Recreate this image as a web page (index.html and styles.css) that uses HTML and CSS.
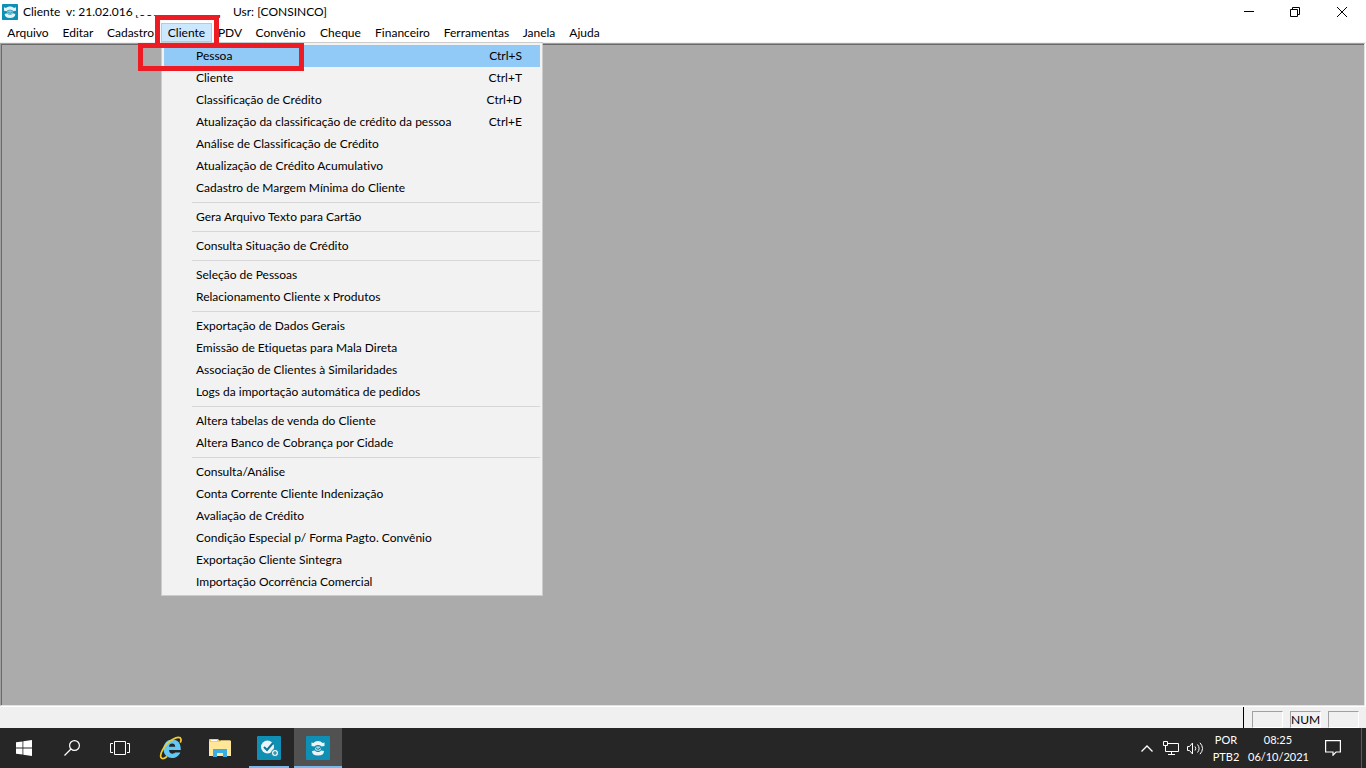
FILE: index.html
```
<!DOCTYPE html>
<html lang="pt-br">
<head>
<meta charset="utf-8">
<title>Cliente</title>
<link rel="stylesheet" href="styles.css">
</head>
<body>
<header class="titlebar">
	<svg class="appicon" viewBox="0 0 24 24">
		<rect width="24" height="24" rx="1" fill="#0f8fb3"/>
		<path d="M3 10V5l3 1c3-3 9-3 12 0l3-1v5l-4 1c-2-3-8-3-10 0zM4 15l4-1c2 3 6 3 8 0l4 1c0 4-3 6-8 6s-8-2-8-6z" fill="#e3f2f6"/>
		<path d="M8 11q4-3 8 0v3q-4 4-8 0z" fill="#8ccbdb"/>
		<path d="M9 12l3 2 3-2" fill="none" stroke="#0f7f9f"/>
	</svg>
	<h1 class="caption">Cliente</h1>
	<span class="version">v: 21.02.016</span>
	<span class="company"><span>[001 -</span><span>]</span></span>
	<span class="user">Usr: [CONSINCO]</span>
	<div class="winbuttons">
		<button type="button" aria-label="Minimizar"><svg viewBox="0 0 10 10"><path d="M0 4.500h10"/></svg></button>
		<button type="button" aria-label="Restaurar"><svg viewBox="0 0 10 10"><path d="M.5 2.500h7v7h-7zM2.500 2.500v-2h7v7h-2"/></svg></button>
		<button type="button" aria-label="Fechar"><svg viewBox="0 0 10 10"><path d="M0 0l10 10M10 0L0 10"/></svg></button>
	</div>
</header>

<nav class="menubar">
	<button type="button">Arquivo</button>
	<button type="button">Editar</button>
	<button type="button">Cadastro</button>
	<div class="menu">
		<button type="button" class="open">Cliente</button>
		<div class="popup">
			<button type="button" class="selected">Pessoa<kbd>Ctrl+S</kbd></button>
			<button type="button">Cliente<kbd>Ctrl+T</kbd></button>
			<button type="button">Classificação de Crédito<kbd>Ctrl+D</kbd></button>
			<button type="button">Atualização da classificação de crédito da pessoa<kbd>Ctrl+E</kbd></button>
			<button type="button">Análise de Classificação de Crédito</button>
			<button type="button">Atualização de Crédito Acumulativo</button>
			<button type="button">Cadastro de Margem Mínima do Cliente</button>
			<hr>
			<button type="button">Gera Arquivo Texto para Cartão</button>
			<hr>
			<button type="button">Consulta Situação de Crédito</button>
			<hr>
			<button type="button">Seleção de Pessoas</button>
			<button type="button">Relacionamento Cliente x Produtos</button>
			<hr>
			<button type="button">Exportação de Dados Gerais</button>
			<button type="button">Emissão de Etiquetas para Mala Direta</button>
			<button type="button">Associação de Clientes à Similaridades</button>
			<button type="button">Logs da importação automática de pedidos</button>
			<hr>
			<button type="button">Altera tabelas de venda do Cliente</button>
			<button type="button">Altera Banco de Cobrança por Cidade</button>
			<hr>
			<button type="button">Consulta/Análise</button>
			<button type="button">Conta Corrente Cliente Indenização</button>
			<button type="button">Avaliação de Crédito</button>
			<button type="button">Condição Especial p/ Forma Pagto. Convênio</button>
			<button type="button">Exportação Cliente Sintegra</button>
			<button type="button">Importação Ocorrência Comercial</button>
		</div>
		<div class="mark mark-menu"></div>
		<div class="mark mark-item"></div>
	</div>
	<button type="button">PDV</button>
	<button type="button">Convênio</button>
	<button type="button">Cheque</button>
	<button type="button">Financeiro</button>
	<button type="button">Ferramentas</button>
	<button type="button">Janela</button>
	<button type="button">Ajuda</button>
</nav>

<main class="workspace"></main>

<div class="statusbar">
	<div class="panes">
		<span></span>
		<span>NUM</span>
		<span></span>
	</div>
</div>

<footer class="taskbar">
	<div class="system">
		<button type="button" aria-label="Iniciar">
			<svg width="16" height="16" viewBox="0 0 16 16" fill="#fff"><path d="M0 2.300L6.500 1.400v6.200H0zM7.300 1.300L16 0v7.600H7.300zM0 8.400h6.500v6.200L0 13.700zM7.300 8.400H16V16l-8.700-1.300z"/></svg>
		</button>
		<button type="button" aria-label="Pesquisar">
			<svg width="16" height="16" viewBox="0 0 16 16" fill="none" stroke="#fff" stroke-width="1.200"><circle cx="10.500" cy="5.500" r="4.900"/><path d="M7 9L.5 15.500"/></svg>
		</button>
		<button type="button" aria-label="Visão de tarefas">
			<svg width="20" height="14" viewBox="0 0 20 14" fill="none" stroke="#fff"><path d="M4.500.5h11v13h-11zM3 2.500H.5v9H3M17 2.500h2.500v9H17"/></svg>
		</button>
	</div>
	<div class="apps">
		<button type="button" aria-label="Internet Explorer">
			<svg width="24" height="24" viewBox="0 0 24 24" fill="none">
				<path d="M21.300 16.500C20 20 16.800 22 13 22c-5 0-8.500-3.700-8.500-9S8 3.500 13.300 3.500c5.500 0 8.700 4 8.500 10.500H10c.2 2.300 1.400 3.700 3.400 3.700 1.300 0 2.200-.4 2.800-1.200zM10 10.800h6.200c-.1-2-1.200-3.200-3-3.200S10.200 8.800 10 10.800z" fill="#62c8f5"/>
				<path d="M8 20.500c-2 1.600-4 2.600-5.300 1.800C-.5 20 4.500 8.500 14 3.300c4-2.200 7.300-2.700 8 0 .2 1-.2 2.300-.8 3.300" stroke="#f6cb2d" stroke-width="1.700"/>
			</svg>
		</button>
		<button type="button" aria-label="Explorador de Arquivos">
			<svg width="22" height="18" viewBox="0 0 22 18">
				<path d="M0 1q0-1 1-1h8l1.500 1.500H21q1 0 1 1V17H0z" fill="#f4cf63"/>
				<path d="M0 3h11l1-1.500h9l1 1V17H0z" fill="#ffe699"/>
				<path d="M2 1h6v1H2z" fill="#fff"/>
				<path d="M4 10h14v8h-4v-4H8v4H4z" fill="#3aaee3"/>
			</svg>
		</button>
		<button type="button" class="running" aria-label="Consinco">
			<svg width="24" height="24" viewBox="0 0 24 24">
				<rect width="24" height="24" rx="1" fill="#0f8fb3"/>
				<circle cx="10.500" cy="11" r="6.500" fill="#eef4f6"/>
				<path d="M7 11l3 3 6-7" fill="none" stroke="#0b7695" stroke-width="2"/>
				<circle cx="18" cy="17" r="3.600" fill="#eef4f6" stroke="#0f8fb3"/>
				<path d="M16 17h4M18 15v4" stroke="#0f7f9f" stroke-width="1.200"/>
			</svg>
		</button>
		<button type="button" class="running active" aria-label="Cliente">
			<svg width="24" height="24" viewBox="0 0 24 24">
				<rect width="24" height="24" rx="1" fill="#0f8fb3"/>
				<path d="M5.500 10V6.500L7.500 7c2-2.700 7-2.700 9 0l2-.5V10l-3 .5c-1.500-2-5.500-2-7 0zM6 15l3-.5c1.500 2 4.500 2 6 0l3 .5c0 3-2 4.500-6 4.500S6 18 6 15z" fill="#eef4f6"/>
				<path d="M9 11.500q3-2.500 6 0v2q-3 3-6 0z" fill="#a5d5e1"/>
				<path d="M9.500 11.500l2.500 2 3-2" fill="none" stroke="#0f7f9f"/>
			</svg>
		</button>
	</div>
	<div class="tray">
		<svg width="12" height="7" viewBox="0 0 12 7" fill="none" stroke="#fff" stroke-width="1.300"><path d="M.5 6.500L6 1l5.500 5.500"/></svg>
		<svg width="16" height="14" viewBox="0 0 16 14" fill="none" stroke="#fff"><path d="M5 2.500h10.500v8H2.500V5M.5.5h4v4h-4zM8.500 10.500v3M5 13.500h7"/></svg>
		<svg width="17" height="13" viewBox="0 0 17 13" fill="none" stroke="#fff"><path d="M.5 4.500h2l3-3.500v11l-3-3.500h-2zM8 4.500q1.500 2 0 4M10.500 2.500q3.200 4 0 8M13 .8q5 5.700 0 11.400"/></svg>
		<div class="lang">POR<br>PTB2</div>
		<div class="clock">08:25<br>06/10/2021</div>
		<svg width="16" height="16" viewBox="0 0 16 16" fill="none" stroke="#fff" stroke-width="1.200"><path d="M.6.6h14.800v11.400H11L8 15.200V12H.6z"/></svg>
	</div>
</footer>
</body>
</html>
```
FILE: styles.css
```
*{
	box-sizing:border-box;
}

body{
	margin:0;
	height:100vh;
	display:flex;
	flex-direction:column;
	background:#fff;
	color:#000;
	font:12px/16px Lato, "Open Sans", sans-serif;
	font-variant-ligatures:none;
}

button{
	margin:0;
	padding:0;
	border:0;
	background:none;
	color:inherit;
	font:inherit;
	font-variant-ligatures:none;
}

svg{
	display:block;
}

/* title bar */
.titlebar{
	display:flex;
	align-items:center;
	height:23px;
	padding-left:2px;
}

.appicon{
	width:16px;
	height:16px;
	margin-right:5px;
}

.caption{
	margin:0;
	width:43px;
	font-size:12px;
	font-weight:normal;
	line-height:16px;
}

.version{
	width:66px;
	white-space:nowrap;
}

.company{
	position:relative;
	display:flex;
	justify-content:space-between;
	width:86px;
	margin:0 12px 0 3px;
}

.company::after{
	content:"";
	position:absolute;
	top:0;
	left:0;
	right:0;
	height:11px;
	background:#fff;
}

.winbuttons{
	display:flex;
	margin-left:auto;
}

.winbuttons button{
	display:flex;
	align-items:center;
	justify-content:center;
	width:46px;
	height:20px;
}

.winbuttons svg{
	width:10px;
	height:10px;
	fill:none;
	stroke:#000;
}

.winbuttons button:last-child{
	width:48px;
}

/* menu bar */
.menubar{
	display:grid;
	grid-template-columns:56px 44px 61px 51px 36px 65px 55px 69px 79px 46px 45px;
	height:20px;
	border-bottom:1px solid #f0f0f0;
}

.menubar > button,
.menu .open{
	white-space:nowrap;
	text-align:center;
}

.menu{
	position:relative;
}

.menu .open{
	width:100%;
	height:19px;
	background:#cce8ff;
	border:1px solid #99d1ff;
}

.popup{
	position:absolute;
	z-index:1;
	top:19px;
	left:0;
	width:382px;
	padding:2px;
	background:#f2f2f2;
	border:1px solid #ccc;
}

.popup button{
	display:flex;
	justify-content:space-between;
	align-items:center;
	width:100%;
	height:22px;
	padding:0 18px 0 32px;
	text-align:left;
}

.popup .selected{
	background:#91c9f7;
}

.popup kbd{
	font:inherit;
}

.popup hr{
	height:1px;
	margin:3px 0 3px 28px;
	border:0;
	background:#d7d7d7;
}

/* red highlight frames */
.mark{
	position:absolute;
	z-index:2;
	border:5px solid #ed1c24;
	pointer-events:none;
}

.mark-menu{
	top:-8px;
	left:-6px;
	width:64px;
	height:33px;
}

.mark-item{
	top:20px;
	left:-23px;
	width:166px;
	height:28px;
}

/* MDI area */
.workspace{
	flex:1;
	margin-right:1px;
	background:#ababab;
	border:1px solid #a0a0a0;
	border-right-color:#e3e3e3;
	border-bottom-color:#e3e3e3;
	box-shadow:inset 1px 1px #696969;
}

.statusbar{
	display:flex;
	justify-content:flex-end;
	height:22px;
	background:#f0f0f0;
	border-top:1px solid #fff;
}

.panes{
	display:flex;
	gap:7px;
	padding:4px 7px 0 8px;
	border-left:1px solid #000;
}

.panes span{
	width:31px;
	height:17px;
	border:1px solid #fff;
	border-top-color:#a0a0a0;
	border-left-color:#a0a0a0;
	text-align:center;
}

/* taskbar */
.taskbar{
	display:flex;
	height:40px;
	background:#262626;
	color:#fff;
}

.system,
.apps{
	display:flex;
}

.apps{
	gap:1px;
	margin-left:3px;
}

.taskbar button{
	position:relative;
	display:flex;
	align-items:center;
	justify-content:center;
	width:48px;
	height:40px;
}

.running::after{
	content:"";
	position:absolute;
	left:4px;
	right:4px;
	bottom:0;
	height:2px;
	background:#76b9ed;
}

.taskbar .active{
	background:#515151;
}

.running.active::after{
	left:0;
	right:0;
}

.tray{
	display:flex;
	align-items:center;
	gap:8px;
	margin-left:auto;
	margin-right:4px;
	padding-right:20px;
	border-right:1px solid #5a5a5a;
	font-size:11px;
	line-height:17px;
	text-align:center;
}

.tray svg:first-child{
	margin-right:2px;
}

.lang{
	width:28px;
}

.clock{
	width:60px;
	margin-right:9px;
}
```
